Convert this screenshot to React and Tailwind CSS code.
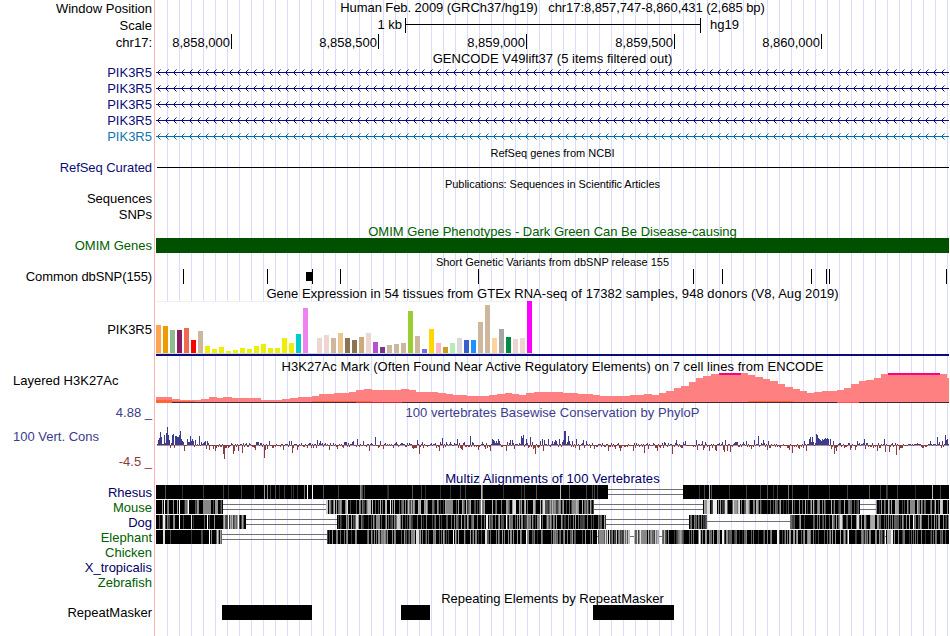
/**
 * App.jsx: genome browser image, one row of tracks per component.
 * All the svg tracks share the same x axis: 156 (left) to 949 (right).
 */

const LEFT = 156;
const WIDTH = 793;

const NAVY = '#0c0c78';

// small seeded generator, so that the dense tracks stay stable between renders
function makeRandom(seed) {
  let s = seed;
  return () => {
    s = (s * 1664525 + 1013904223) % 4294967296;
    return s / 4294967296;
  };
}

/* ---------- data ---------- */

const RULER = [
  { label: '8,858,000', cell: 'w-[76px]' },
  { label: '8,858,500', cell: 'w-[147px]' },
  { label: '8,859,000', cell: 'w-[148px]' },
  { label: '8,859,500', cell: 'w-[148px]' },
  { label: '8,860,000', cell: 'w-[147px]' },
];

const GENES = [
  { color: NAVY, text: 'text-[#0c0c78]' },
  { color: NAVY, text: 'text-[#0c0c78]' },
  { color: NAVY, text: 'text-[#0c0c78]' },
  { color: NAVY, text: 'text-[#0c0c78]' },
  { color: '#006eaf', text: 'text-[#1474b4]' },
];

const SNPS = [183, 267, 312, 340, 478, 693, 722, 811, 826, 829, 946];

// [height, color] per tissue
const Y = '#eeee00';
const TAN = '#cdb79e';
const TISSUES = [
  [28, '#ffa54f'], [27, '#ee9a00'], [23, '#8fbc8f'], [23, '#8b1c62'], [25, '#ee6a50'], [13, '#ff0000'],
  [22, TAN], [7, Y], [4, Y], [6, Y], [2, Y], [3, Y], [5, Y], [4, Y], [7, Y], [9, Y], [5, Y], [5, Y],
  [15, Y], [10, Y], [19, '#00cdcd'], [45, '#ee82ee'], [0, TAN], [15, '#eed5d2'], [18, '#eed5d2'],
  [15, TAN], [20, '#eec591'], [15, '#8b7355'], [13, '#8b7355'], [16, '#cdaa7d'], [20, '#eed5d2'],
  [11, '#b452cd'], [6, '#7a378b'], [8, TAN], [9, TAN], [10, TAN], [42, '#9acd32'], [17, TAN],
  [4, '#7b68ee'], [24, '#ffd700'], [10, '#ffb6c1'], [6, '#cd9b1d'], [10, '#b4eeb4'], [15, '#d9d9d9'],
  [13, '#3a5fcd'], [13, '#1e90ff'], [31, TAN], [48, TAN], [15, '#ffd39b'], [24, '#a6a6a6'],
  [16, '#008b45'], [14, '#eed5d2'], [15, '#eed5d2'], [52, '#ff00ff'],
];

// [x, top] steps, the baseline is at 402
const H3K = [
  [156, 397], [172, 399], [180, 400], [201, 399], [209, 397], [217, 398], [223, 397], [232, 398],
  [261, 400], [282, 399], [290, 398], [298, 397], [312, 396], [319, 394], [334, 393], [349, 392],
  [356, 390], [364, 389], [372, 390], [401, 389], [409, 390], [416, 392], [438, 393], [446, 394],
  [453, 395], [467, 396], [489, 395], [497, 394], [505, 393], [512, 394], [519, 395], [526, 393],
  [534, 392], [563, 393], [578, 394], [593, 395], [600, 396], [622, 396], [630, 395], [644, 394],
  [652, 395], [659, 393], [666, 391], [674, 388], [681, 386], [689, 382], [696, 378], [703, 376],
  [711, 374], [719, 373], [741, 373], [748, 375], [755, 377], [763, 379], [770, 381], [778, 384],
  [785, 387], [793, 389], [800, 391], [807, 393], [814, 392], [822, 391], [837, 390], [844, 388],
  [851, 384], [859, 381], [866, 380], [874, 378], [881, 374], [888, 373], [940, 374], [947, 378],
  [949, 378],
];

// [x, score] of the sites that stand out, the other sites stay near zero
const SCORES = [
  [158, 5], [159, 7], [160, 13], [161, 8], [164, 10], [166, 12], [167, 18], [168, 10], [169, 5], [172, 10],
  [173, 11], [175, 9], [176, 9], [177, 8], [178, 8], [179, 10], [180, 14], [181, 6], [182, 4], [183, 3],
  [184, -6], [187, 6], [188, 3], [189, 3], [190, 9], [191, 4], [192, 6], [193, 4], [195, 5], [199, 9],
  [201, 3], [204, 3], [205, 4], [206, -4], [207, 4], [209, -5], [213, -4], [215, -6], [223, -9], [224, -14],
  [226, -3], [228, -3], [233, -9], [234, -6], [238, -6], [242, -8], [256, 3], [257, 3], [258, 3], [260, 2],
  [254, -3], [255, -5], [264, -13], [265, -5], [267, -4], [269, 4], [283, -5], [289, 4], [291, 4], [292, -8],
  [297, -5], [317, 5], [320, 4], [329, -5], [337, -4], [344, 3], [345, 3], [346, 3], [348, 2], [352, 3],
  [353, 4], [357, 6], [363, 4], [369, -6], [371, 2], [375, 8], [380, 4], [383, -4], [396, 3], [413, -4],
  [417, 5], [419, -9], [422, 3], [439, -6], [440, 3], [442, 7], [446, 3], [450, 3], [457, 6], [461, -4],
  [462, -5], [464, 3], [470, 9], [472, 3], [478, -5], [482, 3], [485, -4], [490, -6], [492, 6], [493, 5],
  [494, 4], [496, 4], [497, 2], [498, 6], [499, 4], [506, -6], [507, 3], [510, 5], [512, 5], [514, -4],
  [521, 9], [522, 7], [523, 10], [526, 6], [530, 8], [532, 3], [533, -4], [535, -9], [540, 4], [542, 6],
  [543, -6], [544, 5], [548, 6], [552, 4], [554, 3], [555, 5], [556, 4], [559, 6], [562, 3], [563, 5],
  [564, 14], [565, 14], [567, 3], [568, 9], [569, 4], [572, 4], [576, 6], [579, -5], [583, 5], [586, 4],
  [594, -4], [608, -6], [615, -4], [620, -6], [633, -6], [644, -8], [648, -4], [657, -6], [664, 3],
  [672, -9], [676, 5], [682, -3], [683, 3], [685, 4], [696, 5], [697, -5], [702, 4], [703, -5], [705, 3],
  [709, -6], [715, -5], [716, -6], [722, 3], [723, -5], [724, -7], [725, 5], [727, -6], [730, -7],
  [735, 3], [736, 3], [737, 3], [743, 3], [746, 4], [751, -4], [754, 5], [758, 9], [763, 5], [767, -5],
  [768, 4], [789, -5], [792, -8], [799, -4], [804, 4], [806, -6], [809, 6], [810, 8], [811, 3], [812, 8],
  [813, 3], [815, 2], [816, 11], [817, 10], [818, 7], [819, 6], [820, 5], [821, 4], [822, 6], [823, 5],
  [824, 6], [825, 7], [826, 6], [827, 7], [828, 6], [830, 6], [831, -4], [833, 4], [834, -9], [836, -6],
  [850, -5], [855, -5], [857, 4], [864, 6], [865, -4], [877, -6], [884, 6], [885, -7], [889, -7],
  [896, -10], [899, -5], [930, 4], [937, 8], [939, 3], [942, 4], [945, 10], [946, 5], [947, 6],
];

// blocks: [from, to, share of black, darkest-to-lightest bias], marks: [x, width, grey]
const ALIGNMENTS = [
  {
    name: 'Rhesus',
    text: 'text-[#000064]',
    blocks: [[156, 608, 0.97, 0.2], [683, 949, 0.97, 0.2]],
    gaps: [[608, 683, 2]],
    marks: [
      [182, 1, '#333'], [223, 1, '#444'], [228, 1, '#333'], [241, 1, '#444'], [254, 1, '#444'], [264, 1, '#999'],
      [267, 1, '#888'], [270, 1, '#444'], [284, 1, '#444'], [291, 1, '#333'], [297, 1, '#333'], [304, 1, '#777'],
      [307, 1, '#fff'], [312, 1, '#fff'], [323, 1, '#555'], [338, 1, '#444'], [360, 1, '#888'], [361, 1, '#666'],
      [364, 1, '#444'], [412, 1, '#555'], [425, 1, '#333'], [440, 1, '#333'], [450, 1, '#333'], [460, 1, '#444'],
      [465, 1, '#444'], [481, 1, '#bbb'], [482, 1, '#777'], [503, 1, '#333'], [524, 1, '#444'], [536, 1, '#555'],
      [560, 1, '#bbb'], [569, 1, '#555'], [586, 1, '#444'], [592, 1, '#444'], [597, 1, '#444'],
      [699, 1, '#333'], [709, 1, '#bbb'], [711, 1, '#555'], [746, 1, '#444'], [760, 1, '#444'], [767, 1, '#555'],
      [777, 1, '#444'], [788, 1, '#777'], [808, 1, '#444'], [829, 1, '#333'], [847, 1, '#444'], [869, 1, '#555'],
      [886, 1, '#444'], [932, 1, '#bbb'], [940, 1, '#444'],
    ],
  },
  {
    name: 'Mouse',
    text: 'text-[#006000]',
    blocks: [[156, 223, 0.72, 0.6], [326, 594, 0.48, 0.7], [703, 750, 0.3, 0.9], [750, 860, 0.52, 0.65], [876, 949, 0.52, 0.7]],
    gaps: [[223, 326, 2], [594, 703, 2], [860, 876, 2]],
    marks: [
      [164, 1, '#fff'], [179, 1, '#fff'], [188, 1, '#fff'], [203, 8, '#888'], [215, 3, '#999'], [326, 2, '#ccc'],
      [347, 1, '#ddd'], [368, 3, '#bbb'], [390, 1, '#eee'], [446, 7, '#888'], [481, 1, '#fff'], [513, 3, '#e0e0e0'],
      [543, 2, '#ddd'], [572, 4, '#888'], [707, 3, '#ddd'], [713, 4, '#eee'], [725, 2, '#ddd'], [734, 3, '#999'],
      [910, 5, '#888'], [940, 2, '#ccc'],
    ],
  },
  {
    name: 'Dog',
    text: 'text-[#000064]',
    blocks: [[156, 223, 0.75, 0.5], [223, 246, 0.05, 0.75], [337, 606, 0.52, 0.6], [689, 707, 0.4, 0.4], [790, 949, 0.5, 0.65]],
    gaps: [[246, 337, 2], [606, 689, 2], [707, 790, 1]],
    marks: [
      [163, 2, '#eee'], [179, 1, '#fff'], [191, 1, '#ddd'], [207, 1, '#fff'], [228, 1, '#fff'], [238, 1, '#fff'],
      [244, 2, '#000'], [356, 2, '#ddd'], [376, 4, '#888'], [397, 3, '#ccc'], [486, 2, '#eee'], [506, 1, '#fff'],
      [540, 1, '#fff'], [840, 2, '#ddd'], [857, 2, '#ddd'], [871, 4, '#aaa'], [913, 1, '#fff'],
    ],
  },
  {
    name: 'Elephant',
    text: 'text-[#006000]',
    blocks: [[156, 164, 0.6, 0.6], [164, 211, 0.94, 0.2], [211, 222, 0.7, 0.8], [327, 412, 0.6, 0.55], [412, 597, 0.68, 0.6], [598, 630, 0.12, 0.9], [634, 659, 0.1, 0.9], [662, 674, 0.3, 0.9], [674, 885, 0.6, 0.6], [886, 949, 0.7, 0.5]],
    gaps: [[222, 327, 2], [597, 598, 1], [630, 634, 1], [659, 662, 1], [885, 886, 1]],
    marks: [
      [163, 2, '#ddd'], [209, 1, '#fff'], [411, 3, '#888'], [416, 3, '#e0e0e0'], [453, 1, '#fff'], [485, 2, '#ddd'],
      [526, 1, '#fff'], [599, 5, '#888'], [642, 5, '#888'], [670, 4, '#000'], [699, 1, '#fff'], [722, 2, '#eee'],
      [777, 2, '#eee'], [848, 1, '#fff'], [887, 4, '#aaa'], [891, 2, '#eee'],
    ],
  },
];

const UNALIGNED = [
  { name: 'Chicken', text: 'text-[#006000]' },
  { name: 'X_tropicalis', text: 'text-[#000064]' },
  { name: 'Zebrafish', text: 'text-[#006000]' },
];

/* ---------- layout pieces ---------- */

function Row({ h, label, labelClass = '', children }) {
  return (
    <div className={`flex ${h}`}>
      <div className={`flex w-[155px] shrink-0 items-center justify-end border-r border-[#ffb4b4] pr-[2px] whitespace-nowrap ${labelClass}`}>
        {label}
      </div>
      <div className="w-[794px] bg-[linear-gradient(to_right,#dcdcff_1px,transparent_1px)] bg-[size:12px_100%] bg-[position:11px_0] bg-origin-content bg-clip-content pl-px">
        {children}
      </div>
    </div>
  );
}

function Title({ h, text, label, className = 'text-[13px]' }) {
  return (
    <Row h={h} label={label}>
      <div className={`flex h-full items-center justify-center whitespace-pre ${className}`}>{text}</div>
    </Row>
  );
}

function Track({ top = 0, height, children }) {
  return (
    <svg className="block" width={WIDTH} height={height} viewBox={`${LEFT} ${top} ${WIDTH} ${height}`} shapeRendering="crispEdges">
      {children}
    </svg>
  );
}

/* ---------- tracks ---------- */

function GeneLine({ color }) {
  const arrows = [];
  for (let x = 157; x < 948; x += 8) arrows.push(x);
  return (
    <Track height={16}>
      <rect x={156} y={8} width={793} height={1} fill={color} />
      {arrows.map((x) => (
        <g key={x} fill={color}>
          <path d={`M${x + 1} 7h1v1h-1zM${x + 1} 9h1v1h-1zM${x + 2} 6h1v1h-1zM${x + 2} 10h1v1h-1z`} />
          <path d={`M${x + 3} 5h1v1h-1zM${x + 3} 11h1v1h-1z`} opacity="0.5" />
        </g>
      ))}
    </Track>
  );
}

function Expression() {
  return (
    <Track top={301} height={56}>
      <rect x={156} y={301} width={378} height={53} fill="#fff" />
      <rect x={156} y={301} width={378} height={1} fill="#f0f0f0" />
      <rect x={156} y={353} width={378} height={1} fill="#d8d8d8" />
      {TISSUES.map(([h, color], i) => (
        <rect key={i} x={156 + i * 7} y={353 - h} width={5} height={h} fill={color} />
      ))}
      <rect x={156} y={354} width={793} height={2} fill={NAVY} />
    </Track>
  );
}

function Acetylation() {
  return (
    <Track top={373} height={32}>
      {H3K.slice(0, -1).map(([x, top], i) => (
        <rect key={x} x={x} y={top} width={H3K[i + 1][0] - x} height={402 - top} fill="#ff8080" />
      ))}
      <rect x={719} y={373} width={22} height={2} fill="#ff0080" />
      <rect x={888} y={373} width={52} height={2} fill="#ff0080" />
      <rect x={156} y={400} width={16} height={2} fill="#ff6633" />
      <rect x={172} y={401} width={22} height={1} fill="#ff6644" />
      <rect x={312} y={401} width={60} height={1} fill="#ff6644" />
      <rect x={748} y={401} width={45} height={1} fill="#ff6633" />
      <rect x={156} y={402} width={793} height={1} fill="#4a2434" />
      <rect x={156} y={402} width={16} height={1} fill="#ff6633" />
      <rect x={356} y={402} width={46} height={1} fill="#c82840" />
      <rect x={837} y={402} width={22} height={1} fill="#ff5050" />
    </Track>
  );
}

function Conservation() {
  const random = makeRandom(41);
  const known = new Map(SCORES);
  const bars = [];
  for (let x = 157; x < 949; x++) {
    const r = random();
    const noise = r < 0.3 ? 1 : r < 0.42 ? 2 : r < 0.7 ? -1 : r < 0.9 ? -2 : -3;
    bars.push([x, known.has(x) ? known.get(x) : noise]);
  }
  return (
    <Track top={421} height={50}>
      {bars.map(([x, v]) =>
        v > 0 ? (
          <rect key={x} x={x} y={445 - v} width={1} height={v} fill="#3c3c8c" />
        ) : (
          <rect key={x} x={x} y={445} width={1} height={-v} fill="#8c3c3c" />
        )
      )}
      <rect x={157} y={445} width={792} height={1} fill="#8c3c3c" opacity="0.6" />
    </Track>
  );
}

function Alignment({ blocks, gaps, marks, seed }) {
  const random = makeRandom(seed);
  const stripes = [];
  blocks.forEach(([from, to, black, bias]) => {
    for (let x = from; x < to; x++) {
      if (random() < black) continue;
      const grey = Math.round(40 + random() * 215 * bias);
      stripes.push([x, `rgb(${grey},${grey},${grey})`]);
    }
  });
  return (
    <Track height={15}>
      {gaps.map(([from, to, lines]) =>
        lines === 2 ? (
          <g key={from} fill="#707070">
            <rect x={from} y={4} width={to - from} height={1} />
            <rect x={from} y={9} width={to - from} height={1} />
          </g>
        ) : (
          <rect key={from} x={from} y={6} width={to - from} height={1} fill="#707070" />
        )
      )}
      {blocks.map(([from, to]) => (
        <rect key={from} x={from} y={0} width={to - from} height={14} fill="#000" />
      ))}
      {stripes.map(([x, fill]) => (
        <rect key={x} x={x} y={0} width={1} height={14} fill={fill} />
      ))}
      {marks.map(([x, w, fill]) => (
        <rect key={x} x={x} y={0} width={w} height={14} fill={fill} />
      ))}
    </Track>
  );
}

export default function App() {
  return (
    <div className="h-[636px] w-[950px] overflow-hidden bg-white font-['Liberation_Sans',sans-serif] text-[13px] leading-none text-black">
      <Title
        h="h-[16px]"
        label="Window Position"
        text="Human Feb. 2009 (GRCh37/hg19)   chr17:8,857,747-8,860,431 (2,685 bp)"
        className="pb-px tracking-[-0.07px]"
      />
      <Row h="h-[18px]" label="Scale">
        <div className="flex h-[17px] items-center">
          <div className="w-[249px] pr-[3px] text-right">1 kb</div>
          <div className="mt-px flex h-[15px] w-[296px] items-center border-x border-black pb-px">
            <div className="h-px w-full bg-black" />
          </div>
          <div className="ml-[9px]">hg19</div>
        </div>
      </Row>
      <Row h="h-[17px]" label="chr17:">
        <div className="flex">
          {RULER.map((tick) => (
            <div key={tick.label} className={`flex h-[15px] items-center justify-end border-r border-black pr-px ${tick.cell}`}>
              <span className="pt-[2px]">{tick.label}</span>
            </div>
          ))}
        </div>
      </Row>
      <Title h="h-[13px]" text="GENCODE V49lift37 (5 items filtered out)" className="pt-[2px] tracking-[0.03px]" />
      {GENES.map((gene, i) => (
        <Row key={i} h="h-[16px]" label="PIK3R5" labelClass={gene.text}>
          <GeneLine color={gene.color} />
        </Row>
      ))}

      <Title h="h-[16px]" text="RefSeq genes from NCBI" className="pt-[2px] text-[11px]" />
      <Row h="h-[16px]" label="RefSeq Curated" labelClass="pb-[2px] tracking-[-0.07px] text-[#0c0c78]">
        <Track height={16}>
          <rect x={157} y={7} width={792} height={1} fill="#000" />
        </Track>
      </Row>
      <Title
        h="h-[15px]"
        text="Publications: Sequences in Scientific Articles"
        className="pt-[2px] text-[11px] tracking-[-0.06px]"
      />
      <Row h="h-[16px]" label="Sequences" labelClass="pb-[2px]" />
      <Row h="h-[16px]" label="SNPs" labelClass="pb-[2px]" />
      <Title h="h-[15px]" text="OMIM Gene Phenotypes - Dark Green Can Be Disease-causing" className="pt-[2px] text-[#006000]" />
      <Row h="h-[16px]" label="OMIM Genes" labelClass="pb-[2px] text-[#006000]">
        <div className="h-[15px] bg-[#005000]" />
      </Row>
      <Title h="h-[15px]" text="Short Genetic Variants from dbSNP release 155" className="pt-[2px] text-[11px]" />
      <Row h="h-[16px]" label="Common dbSNP(155)" labelClass="pb-[2px] tracking-[-0.1px]">
        <Track height={16}>
          {SNPS.map((x) => (
            <rect key={x} x={x} y={0} width={1} height={15} fill="#000" />
          ))}
          <rect x={306} y={3} width={7} height={9} fill="#000" />
        </Track>
      </Row>
      <Title
        h="h-[16px]"
        text="Gene Expression in 54 tissues from GTEx RNA-seq of 17382 samples, 948 donors (V8, Aug 2019)"
        className="tracking-[0.055px]"
      />
      <Row h="h-[56px]" label="PIK3R5">
        <Expression />
      </Row>

      <Title
        h="h-[16px]"
        text="H3K27Ac Mark (Often Found Near Active Regulatory Elements) on 7 cell lines from ENCODE"
        className="pt-[3px] tracking-[0.05px]"
      />
      <Row h="h-[32px]" label={<span className="w-[139px] pb-[17px]">Layered H3K27Ac</span>}>
        <Acetylation />
      </Row>
      <Row h="h-[16px]" label="4.88 _" labelClass="pb-[2px] text-[#3c3c8c]">
        <div className="flex h-full items-center justify-center pb-[2px] tracking-[0.04px] text-[#3c3c8c]">
          100 vertebrates Basewise Conservation by PhyloP
        </div>
      </Row>
      <Row
        h="h-[50px]"
        label={
          <div className="flex h-full w-[139px] flex-col justify-between pt-[9px] pb-[3px]">
            <span className="text-[#3c3c8c]">100 Vert. Cons</span>
            <span className="text-right text-[#8c3c3c]">-4.5 _</span>
          </div>
        }
      >
        <Conservation />
      </Row>

      <Title h="h-[14px]" text="Multiz Alignments of 100 Vertebrates" className="tracking-[0.1px] text-[#000064]" />
      {ALIGNMENTS.map((a, i) => (
        <Row key={a.name} h="h-[15px]" label={a.name} labelClass={a.text}>
          <Alignment blocks={a.blocks} gaps={a.gaps} marks={a.marks} seed={7 + i * 13} />
        </Row>
      ))}
      {UNALIGNED.map((a) => (
        <Row key={a.name} h="h-[15px]" label={a.name} labelClass={a.text} />
      ))}

      <Title h="h-[15px]" text="Repeating Elements by RepeatMasker" className="pt-px" />
      <Row h="h-[31px]" label={<span className="pb-[17px]">RepeatMasker</span>}>
        <Track height={31}>
          <rect x={222} y={0} width={90} height={15} fill="#000" />
          <rect x={401} y={0} width={29} height={15} fill="#000" />
          <rect x={593} y={0} width={81} height={15} fill="#000" />
        </Track>
      </Row>
    </div>
  );
}
